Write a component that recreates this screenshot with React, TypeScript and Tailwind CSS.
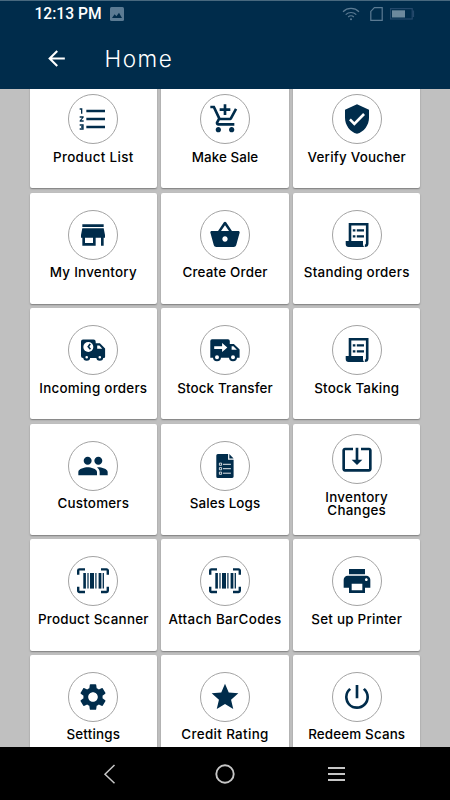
import React from 'react';
import {
  MdAddShoppingCart,
  MdArrowBack,
  MdFormatListNumbered,
  MdPeople,
  MdPowerSettingsNew,
  MdPrint,
  MdSettings,
  MdShoppingBasket,
  MdStar,
  MdStore,
  MdSystemUpdateAlt,
  MdVerifiedUser,
} from 'react-icons/md';

// Custom icons share a 32x32 box so they line up with the Material ones
const ScrollIcon = () => (
  <svg viewBox="0 0 32 32" className="w-8 h-8" fill="none">
    <path d="M9 22V5.2H26.2V24.5a2.3 2.3 0 0 1-2.3 2.3" stroke="currentColor" strokeWidth="2.6" />
    <path d="M4.7 22H22v3.2c0 1.5.8 2.8 2 2.8H7.6a2.9 2.9 0 0 1-2.9-2.9Z" fill="currentColor" />
    <path d="M11.8 11.3h2.6M15.8 11.3h7.2M11.8 17.3h2.6M15.8 17.3h7.2" stroke="currentColor" strokeWidth="2.3" />
  </svg>
);

const TruckClockIcon = () => (
  <svg viewBox="0 0 32 32" className="w-8 h-8" fill="currentColor">
    <path d="M6 5.5h10.5A2.2 2.2 0 0 1 18.7 7.7v1.6h4.2l5.2 5.2v8.2a1.2 1.2 0 0 1-1.2 1.2H6a2 2 0 0 1-2-2v-14.4a2 2 0 0 1 2-2Z" />
    <path d="M20.2 11.5h2.2l2.8 3.2h-5Z" fill="white" />
    <circle cx="11.3" cy="13" r="5" fill="white" />
    <path d="M13.2 9.9 11.3 12.8l2.1 2.4" fill="none" stroke="currentColor" strokeWidth="1.7" />
    <circle cx="9.7" cy="23.2" r="2.4" fill="white" stroke="currentColor" strokeWidth="2.2" />
    <circle cx="22.8" cy="23.2" r="2.4" fill="white" stroke="currentColor" strokeWidth="2.2" />
  </svg>
);

const TruckArrowIcon = () => (
  <svg viewBox="0 0 32 32" className="w-8 h-8" fill="currentColor">
    <path d="M3 5.3h16A1.8 1.8 0 0 1 20.8 7v3h4.1l5.7 5.6v8.2H1.3V7A1.7 1.7 0 0 1 3 5.3Z" />
    <path d="M22.6 12.3h1.8l3.5 3.5h-5.3Z" fill="white" />
    <path d="M5.2 12.2h7.9V9l5.2 4.5-5.2 4.6V15H5.2Z" fill="white" />
    <circle cx="8" cy="23.3" r="3" fill="white" stroke="currentColor" strokeWidth="2" />
    <circle cx="24" cy="23.3" r="3" fill="white" stroke="currentColor" strokeWidth="2" />
  </svg>
);

const FileListIcon = () => (
  <svg viewBox="0 0 32 32" className="w-8 h-8" fill="none">
    <path d="M8.8 4h10.3v5.7h5.5v16.9a1.4 1.4 0 0 1-1.4 1.4H8.8a1.5 1.5 0 0 1-1.5-1.5v-21A1.5 1.5 0 0 1 8.8 4Z" fill="currentColor" />
    <path d="M20.3 4v4.5h4.3Z" fill="currentColor" />
    <path d="M14 14.3h7.9M14 18.7h7.9M14 23.2h7.9" stroke="white" strokeWidth="0.9" />
    <path d="M10.4 13.1h2.2v2.2h-2.2zM10.4 17.6h2.2v2.2h-2.2zM10.4 22.1h2.2v2.2h-2.2z" stroke="white" strokeWidth="0.8" />
  </svg>
);

const BarcodeIcon = () => (
  <svg viewBox="0 0 32 32" className="w-8 h-8" fill="none" stroke="currentColor">
    <path
      d="M1.2 9.7V5.6a1.2 1.2 0 0 1 1.2-1.2H8M24 4.4h5.6a1.2 1.2 0 0 1 1.2 1.2v4.1M30.8 21.7v4.1a1.2 1.2 0 0 1-1.2 1.2H24M8 27H2.4a1.2 1.2 0 0 1-1.2-1.2v-4.1"
      strokeWidth="2.4"
    />
    <path d="M7.6 8v15.6" strokeWidth="2.6" />
    <path d="M11 8v15.6" strokeWidth="1.2" />
    <path d="M15 8v15.6" strokeWidth="4" />
    <path d="M18.9 8v15.6" strokeWidth="1.2" />
    <path d="M23 8v15.6" strokeWidth="2.8" />
    <path d="M26.3 8v15.6" strokeWidth="1.3" />
  </svg>
);

const items = [
  { label: 'Product List', icon: <MdFormatListNumbered />, spacing: 'tracking-[0.35px]' },
  { label: 'Make Sale', icon: <MdAddShoppingCart />, spacing: 'tracking-[0.05px]' },
  { label: 'Verify Voucher', icon: <MdVerifiedUser />, spacing: 'tracking-[0.2px]' },
  { label: 'My Inventory', icon: <MdStore />, spacing: 'tracking-[0.25px]' },
  { label: 'Create Order', icon: <MdShoppingBasket />, spacing: 'tracking-[0.2px]' },
  { label: 'Standing orders', icon: <ScrollIcon />, spacing: 'tracking-[0.25px]' },
  { label: 'Incoming orders', icon: <TruckClockIcon />, spacing: 'tracking-[0.25px]' },
  { label: 'Stock Transfer', icon: <TruckArrowIcon />, spacing: 'tracking-[0.15px]' },
  { label: 'Stock Taking', icon: <ScrollIcon />, spacing: 'tracking-[0.2px]' },
  { label: 'Customers', icon: <MdPeople />, spacing: 'tracking-[0.2px]' },
  { label: 'Sales Logs', icon: <FileListIcon />, spacing: 'tracking-[0.1px]' },
  { label: 'Inventory Changes', icon: <MdSystemUpdateAlt />, spacing: 'tracking-[0.25px]' },
  { label: 'Product Scanner', icon: <BarcodeIcon />, spacing: 'tracking-[0.25px]' },
  { label: 'Attach BarCodes', icon: <BarcodeIcon />, spacing: 'tracking-[0.35px]' },
  { label: 'Set up Printer', icon: <MdPrint />, spacing: 'tracking-[0.25px]' },
  { label: 'Settings', icon: <MdSettings />, spacing: 'tracking-[0.2px]' },
  { label: 'Credit Rating', icon: <MdStar />, spacing: 'tracking-[0.35px]' },
  { label: 'Redeem Scans', icon: <MdPowerSettingsNew />, spacing: 'tracking-[0.15px]' },
];

const StatusBar = () => (
  <div className="flex items-center h-[28px] pl-[34.5px] pr-[34px] text-[#5b7b93]">
    <span className="font-medium text-[15.6px] leading-none text-white w-[67.5px] whitespace-nowrap" style={{ fontFamily: 'Roboto, sans-serif' }}>
      12:13 PM
    </span>
    <svg viewBox="0 0 14 14" className="w-[14px] h-[14px] ml-[8px] -mt-[2px]">
      <rect width="14" height="14" rx="1.5" fill="#5b7b93" />
      <path d="M2 11 4.6 7.3 6.4 9.2 9 5.8 12 11Z" fill="#002c4b" />
    </svg>
    <div className="flex items-center ml-auto -mt-[3px]">
      <svg viewBox="0 0 18 14" className="w-[18px] h-[14px]" fill="none" stroke="currentColor" strokeWidth="1.2">
        <path d="M1 4.7a11.5 11.5 0 0 1 16 0M3.7 7.6a7.7 7.7 0 0 1 10.6 0M6.2 10a4 4 0 0 1 5.6 0" />
        <circle cx="9" cy="12.3" r="1" fill="currentColor" stroke="none" />
      </svg>
      <svg viewBox="0 0 13 14" className="w-[13px] h-[14px] ml-[10px]" fill="none" stroke="currentColor" strokeWidth="1.2">
        <path d="M4.4.7H12.2V13.3H.8V4.4Z" />
      </svg>
      <svg viewBox="0 0 25 12" className="w-[25px] h-[12px] ml-[7px] mr-px">
        <rect x=".6" y=".6" width="21.6" height="10.4" fill="none" stroke="#23486a" strokeWidth="1.2" />
        <rect x="2" y="2.3" width="13" height="7.2" fill="#6d899d" />
        <path d="M22.5 2.5h1.6v6.5h-1.6z" fill="#23486a" />
      </svg>
    </div>
  </div>
);

const App = () => {
  return (
    <div className="w-[450px] h-[800px] flex flex-col overflow-hidden bg-[#c0c0c0]" style={{ fontFamily: 'Inter, sans-serif' }}>
      {/* Header */}
      <header className="h-[89px] shrink-0 bg-[#002c4b] border-t border-[#48697f]">
        <StatusBar />
        <div className="flex items-center h-[60px]">
          <MdArrowBack className="w-[25px] h-[25px] ml-[44px] -mt-[2px] text-white" />
          <h1 className="ml-[35.5px] text-[22.5px] leading-none tracking-[1.5px] text-white font-light">Home</h1>
        </div>
      </header>

      {/* Menu grid, scrolled slightly under the header */}
      <main className="flex-1 min-h-0 overflow-hidden">
        <div className="-mt-[12px] pl-[29.7px] grid grid-cols-[127.3px_127.3px_127.3px] auto-rows-[111.2px] gap-[4.4px]">
          {items.map((item) => (
            <div key={item.label} className="flex flex-col items-center justify-center bg-white rounded-[2px] shadow-[0_1px_1.5px_rgba(0,0,0,0.35)] pb-[7px]">
              <div className="w-[50px] h-[50px] shrink-0 rounded-full border border-[#a3a3a3] flex items-center justify-center text-[32px] text-[#002c4b]">
                {item.icon}
              </div>
              <span className={`mt-[6.5px] max-w-[124px] text-center text-[13.4px] leading-[13.5px] font-[450] text-black ${item.label === 'Inventory Changes' ? 'w-[80px]' : 'whitespace-nowrap'} ${item.spacing}`}>
                {item.label}
              </span>
            </div>
          ))}
        </div>
      </main>

      {/* Android navigation */}
      <nav className="h-[53px] shrink-0 bg-black flex items-center pl-[103px] text-[#c6c6c6]">
        <svg viewBox="0 0 13 20" className="w-[13px] h-[20px]" fill="none" stroke="currentColor" strokeWidth="1.5">
          <path d="M11.5 1 2 10.2l9.5 9" />
        </svg>
        <svg viewBox="0 0 20 20" className="w-[20px] h-[20px] ml-[99px]" fill="none" stroke="currentColor" strokeWidth="1.9">
          <circle cx="10" cy="10" r="8.7" />
        </svg>
        <svg viewBox="0 0 17 16" className="w-[17px] h-[16px] ml-[93px]" stroke="currentColor" strokeWidth="2">
          <path d="M0 2h17M0 8h17M0 14h17" />
        </svg>
      </nav>
    </div>
  );
};

export default App;
